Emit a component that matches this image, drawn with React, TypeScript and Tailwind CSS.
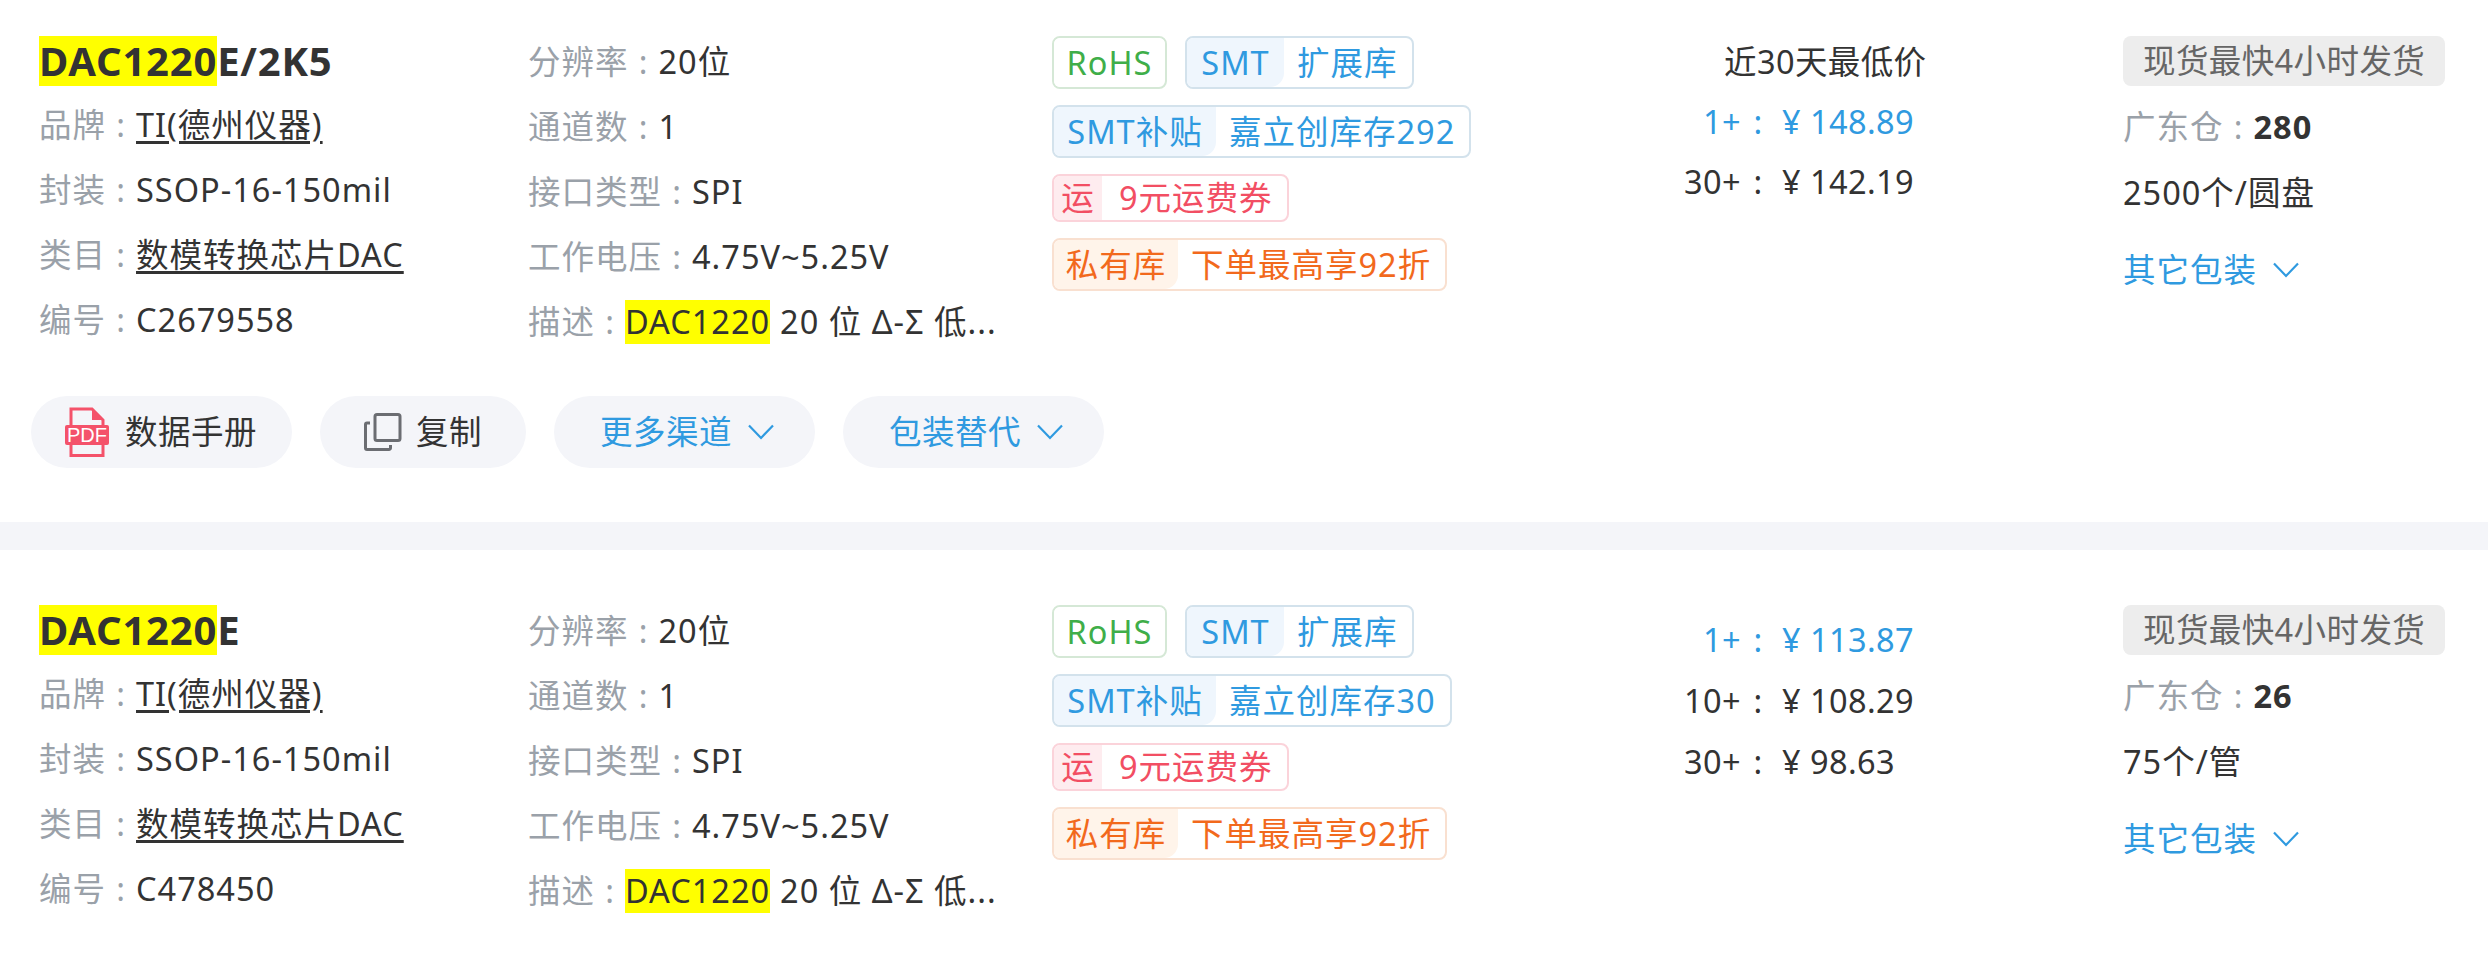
const tagStyles = {
  rohs: { color: "text-[#3fae49]", border: "border-[#d5e8d6]", leftBg: "bg-white" },
  blue: { color: "text-[#2f9ae0]", border: "border-[#d3e2ec]", leftBg: "bg-[#eff6fd]" },
  red: { color: "text-[#f24e63]", border: "border-[#fbd3da]", leftBg: "bg-[#feecef]" },
  orange: { color: "text-[#f2691c]", border: "border-[#f9e0d0]", leftBg: "bg-[#fff4ea]" },
};

const products = [
  {
    title: "E/2K5",
    top: "pt-[36px]",
    code: "C2679558",
    stockTag: "嘉立创库存292",
    prices: [
      { n: "1+", p: "148.89", blue: true },
      { n: "30+", p: "142.19", blue: false },
    ],
    priceBox: "-mt-[4px]",
    priceH: "h-[60px]",
    lowest: true,
    stock: "280",
    unit: "2500个/圆盘",
    actions: true,
  },
  {
    title: "E",
    top: "pt-[55px]",
    code: "C478450",
    stockTag: "嘉立创库存30",
    prices: [
      { n: "1+", p: "113.87", blue: true },
      { n: "10+", p: "108.29", blue: false },
      { n: "30+", p: "98.63", blue: false },
    ],
    priceBox: "mt-[4px]",
    priceH: "h-[61px]",
    lowest: false,
    stock: "26",
    unit: "75个/管",
    actions: false,
  },
];

const Tag = ({
  kind,
  left,
  right,
  leftW,
  small,
}: {
  kind: keyof typeof tagStyles;
  left: string;
  right?: string;
  leftW: string;
  small?: boolean;
}) => {
  const s = tagStyles[kind];
  return (
    <div
      className={`flex border-2 rounded-[8px] overflow-hidden items-stretch whitespace-nowrap ${s.color} ${s.border} ${
        small ? "h-[48px]" : "h-[53px]"
      }`}
    >
      <div className={`flex items-center justify-center ${small ? "" : "rounded-br-[14px]"} ${s.leftBg} ${leftW}`}>
        {left}
      </div>
      {right && <div className={`flex items-center pr-[14px] ${small ? "pl-[17px]" : "pl-[13px]"}`}>{right}</div>}
    </div>
  );
};

const Colon = () => <span className="inline-block w-[30px] text-center text-[#9aa1a9]">:</span>;

const Info = ({ label, children }: { label: string; children: React.ReactNode }) => (
  <div className="h-[65px] flex items-center whitespace-nowrap">
    <span className="text-[#9aa1a9]">{label}</span>
    <Colon />
    {children}
  </div>
);

const Chevron = () => (
  <svg width="26" height="16" viewBox="0 0 26 16" fill="none" stroke="currentColor" strokeWidth="2.2">
    <path d="M1 1.5l12 12.5L25 1.5" />
  </svg>
);

const PdfIcon = () => (
  <svg width="44" height="50" viewBox="0 0 44 50">
    <path d="M6 18V2h21l11 11v5M6 36v12.500h32V36" fill="none" stroke="#f4526a" strokeWidth="3" />
    <path d="M27 1l12 12H27z" fill="#f4526a" />
    <rect x="0" y="18" width="44" height="20" rx="2" fill="#f4526a" />
    <text x="22" y="35" textAnchor="middle" fontSize="20" letterSpacing="0" fill="#fff" fontFamily="Liberation Sans, sans-serif">
      PDF
    </text>
  </svg>
);

const CopyIcon = () => (
  <svg width="38" height="38" viewBox="0 0 38 38" fill="none" stroke="#6b6d72" strokeWidth="3">
    <rect x="11" y="1.500" width="25" height="26" rx="2" />
    <path d="M6 10H3a1.500 1.500 0 0 0-1.500 1.500V35a1.500 1.500 0 0 0 1.500 1.500h22a1.500 1.500 0 0 0 1.500-1.500v-3" />
  </svg>
);

const Pill = ({ children, className }: { children: React.ReactNode; className: string }) => (
  <div className={`h-[72px] rounded-full bg-[#f4f5f9] flex items-center ${className}`}>{children}</div>
);

const Row = ({ item }: { item: (typeof products)[number] }) => (
  <div className={`${item.top} ${item.actions ? "pb-[54px]" : "pb-[40px]"} bg-white`}>
    <div className="flex">
      <div className="w-[528px] pl-[39px] shrink-0">
        <div className="h-[50px] flex items-center text-[40px] tracking-[0.8px] font-bold mb-[6px]">
          <span className="bg-[#ffff00] h-[50px] flex items-center">DAC1220</span>
          {item.title}
        </div>
        <Info label="品牌">
          <span className="underline underline-offset-[4px]">TI(德州仪器)</span>
        </Info>
        <Info label="封装">SSOP-16-150mil</Info>
        <Info label="类目">
          <span className="underline underline-offset-[4px]">数模转换芯片DAC</span>
        </Info>
        <Info label="编号">{item.code}</Info>
      </div>
      <div className="w-[524px] shrink-0 -mt-[7px]">
        <Info label="分辨率">20位</Info>
        <Info label="通道数">1</Info>
        <Info label="接口类型">SPI</Info>
        <Info label="工作电压">4.75V~5.25V</Info>
        <Info label="描述">
          <span className="bg-[#ffff00]">DAC1220</span>
          <span className="ml-[10px]">20 位 Δ-Σ 低...</span>
        </Info>
      </div>
      <div className="w-[600px] shrink-0 flex flex-col items-start gap-[16px]">
        <div className="flex gap-[18px]">
          <Tag kind="rohs" left="RoHS" leftW="w-[111px]" />
          <Tag kind="blue" left="SMT" right="扩展库" leftW="w-[97px]" />
        </div>
        <Tag kind="blue" left="SMT补贴" right={item.stockTag} leftW="w-[162px]" />
        <Tag kind="red" left="运" right="9元运费券" leftW="w-[48px]" small />
        <Tag kind="orange" left="私有库" right="下单最高享92折" leftW="w-[124px]" />
      </div>
      <div className={`w-[471px] shrink-0 tracking-[0.4px] ${item.priceBox}`}>
        {item.lowest && <div className="h-[60px] pl-[72px] flex items-center">近30天最低价</div>}
        {item.prices.map((pr) => (
          <div key={pr.n} className={`${item.priceH} flex items-center ${pr.blue ? "text-[#2f9ae0]" : ""}`}>
            <span className="w-[89px] text-right">{pr.n}</span>
            <span className="w-[34px] text-center">:</span>
            <span className="ml-[7px] w-[28px]">¥</span>
            <span>{pr.p}</span>
          </div>
        ))}
      </div>
      <div className="flex-1 flex flex-col items-start">
        <div className="h-[50px] w-[322px] rounded-[8px] bg-[#ededed] text-[#666] tracking-[0.4px] pl-[20px] flex items-center whitespace-nowrap">
          现货最快4小时发货
        </div>
        <div className="h-[65px] mt-[8px] flex items-center">
          <span className="text-[#9aa1a9]">广东仓</span>
          <Colon />
          <b>{item.stock}</b>
        </div>
        <div className="h-[65px] mt-[1px] flex items-center">{item.unit}</div>
        <div className="h-[65px] mt-[12px] flex items-center text-[#2f9ae0] gap-[16px]">
          其它包装
          <Chevron />
        </div>
      </div>
    </div>
    {item.actions && (
      <div className="flex gap-[28px] pl-[31px] mt-[42px] tracking-[0.5px]">
        <Pill className="w-[261px] pl-[34px] gap-[16px]">
          <PdfIcon />
          数据手册
        </Pill>
        <Pill className="w-[206px] pl-[44px] gap-[14px]">
          <CopyIcon />
          复制
        </Pill>
        <Pill className="w-[261px] pl-[46px] gap-[16px] text-[#2f9ae0]">
          更多渠道
          <Chevron />
        </Pill>
        <Pill className="w-[261px] pl-[46px] gap-[16px] text-[#2f9ae0]">
          包装替代
          <Chevron />
        </Pill>
      </div>
    )}
  </div>
);

const App = () => {
  return (
    <div className="h-[955px] overflow-hidden bg-[#f4f5f9] text-[32.5px] tracking-[1px] leading-[44px] text-[#333] font-['Noto_Sans','Noto_Sans_CJK_SC',sans-serif]">
      {products.map((item, key) => (
        <div key={key} className={key === 0 ? "mb-[28px]" : ""}>
          <Row item={item} />
        </div>
      ))}
    </div>
  );
};

export default App;
